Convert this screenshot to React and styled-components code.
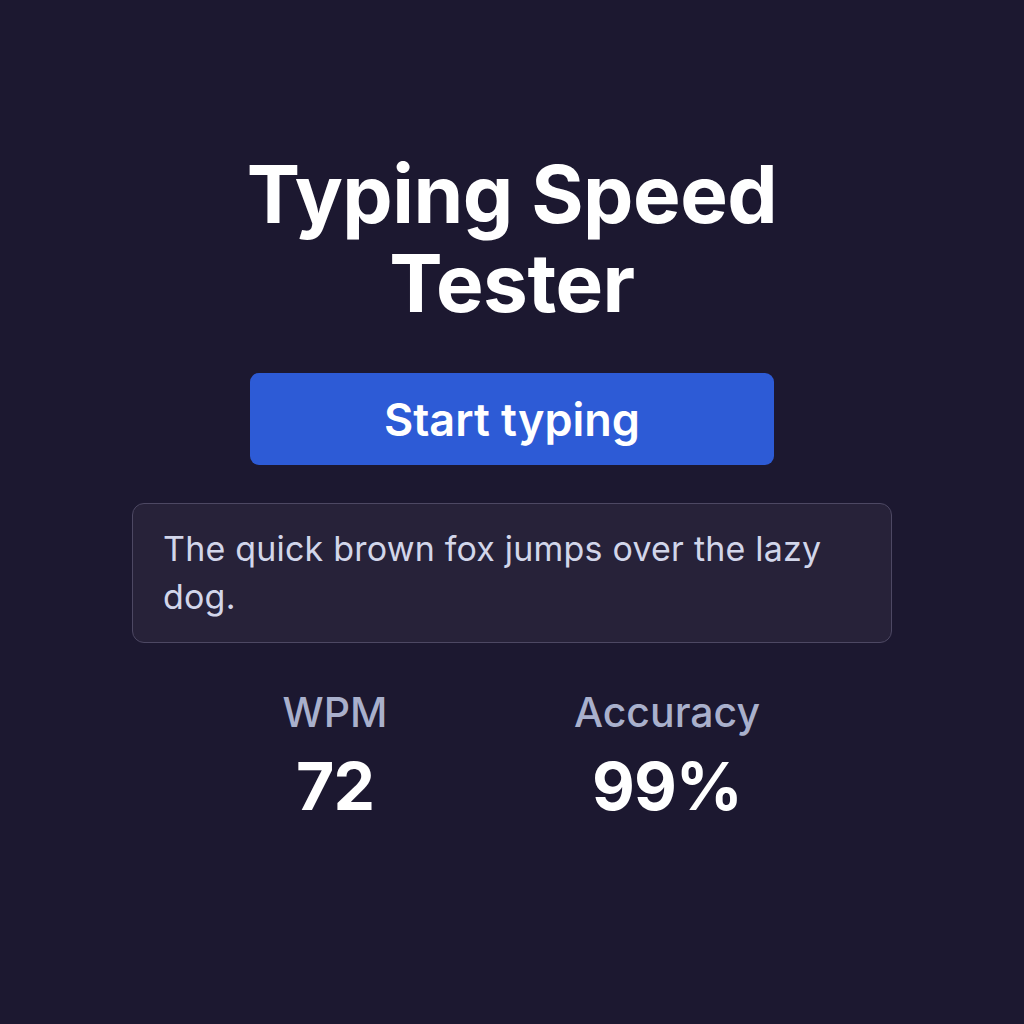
import React from 'react';
import styled, { createGlobalStyle } from 'styled-components';

const GlobalStyle = createGlobalStyle`
  html, body {
    margin: 0;
    padding: 0;
    background: #1c1830;
  }
  body {
    font-family: Inter, 'Noto Sans', sans-serif;
    -webkit-font-smoothing: antialiased;
  }
`;

const Page = styled.div`
  width: 1024px;
  height: 1024px;
  display: flex;
  flex-direction: column;
  align-items: center;
  padding-top: 149px;
  box-sizing: border-box;
`;

const Title = styled.h1`
  margin: 0;
  width: 600px;
  text-align: center;
  color: #ffffff;
  font-size: 80px;
  font-weight: 700;
  line-height: 89px;
  letter-spacing: -0.5px;
`;

const StartButton = styled.button`
  margin-top: 46px;
  width: 524px;
  height: 92px;
  border: none;
  border-radius: 9px;
  background: #2d5bd6;
  color: #ffffff;
  font-family: Inter, sans-serif;
  font-size: 45px;
  font-weight: 600;
  cursor: pointer;
`;

const Prompt = styled.div`
  margin-top: 38px;
  width: 760px;
  height: 140px;
  box-sizing: border-box;
  padding: 21px 30px;
  background: #272239;
  border: 1.5px solid #4d4863;
  border-radius: 12px;
  color: #d2d6ea;
  font-size: 34px;
  line-height: 48px;
  letter-spacing: 0.2px;
`;

const Stats = styled.div`
  margin-top: 45px;
  margin-right: 22px;
  display: grid;
  grid-template-columns: 332px 332px;
`;

const Stat = styled.div`
  display: flex;
  flex-direction: column;
  align-items: center;
`;

const StatLabel = styled.div`
  color: #a9b0cc;
  font-size: 41px;
  font-weight: 500;
  line-height: 48px;
`;

const StatValue = styled.div`
  margin-top: 14px;
  color: #ffffff;
  font-size: 66px;
  font-weight: 700;
  line-height: 72px;
  letter-spacing: -1px;
`;

const stats = [
  { label: 'WPM', value: '72' },
  { label: 'Accuracy', value: '99%' },
];

const App = () => (
  <>
    <GlobalStyle />
    <Page>
      <Title>Typing Speed Tester</Title>
      <StartButton>Start typing</StartButton>
      <Prompt>The quick brown fox jumps over the lazy dog.</Prompt>
      <Stats>
        {stats.map((s) => (
          <Stat key={s.label}>
            <StatLabel>{s.label}</StatLabel>
            <StatValue>{s.value}</StatValue>
          </Stat>
        ))}
      </Stats>
    </Page>
  </>
);

export default App;
